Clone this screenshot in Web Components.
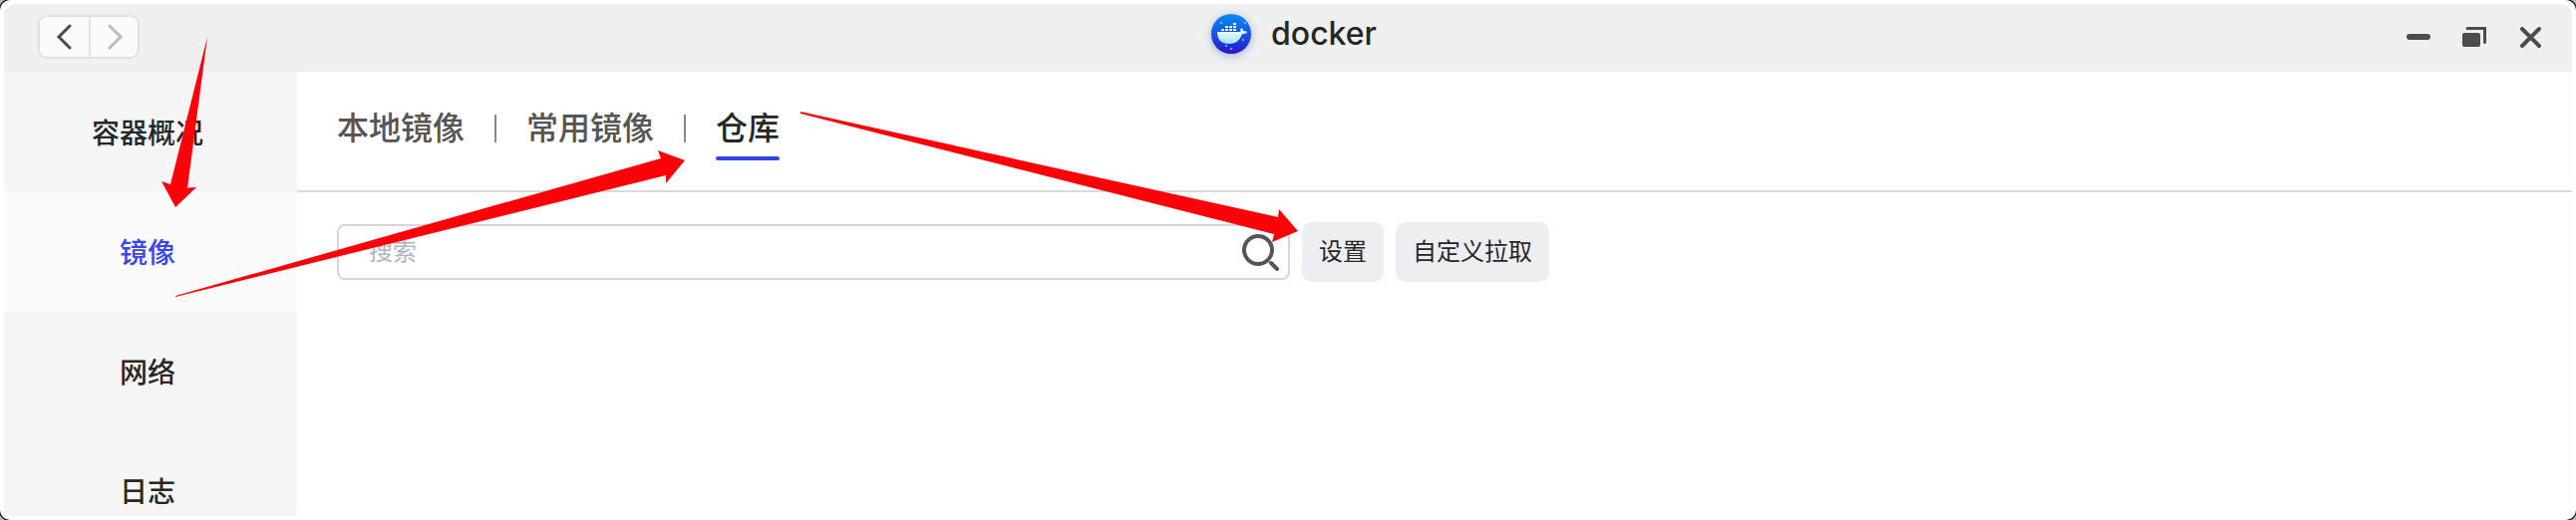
<!DOCTYPE html>
<html lang="zh-CN">
<head>
<meta charset="utf-8">
<title>docker</title>
<style>
  html, body { margin: 0; height: 100%; }
  body { background: #b9b9b9; color: #262626; font-family: Inter, "Noto Sans CJK SC", sans-serif; overflow: hidden; }
</style>
</head>
<body>
<app-window>
  <title-bar slot="bar">docker</title-bar>
  <side-nav slot="side">
    <nav-item>容器概况</nav-item>
    <nav-item current>镜像</nav-item>
    <nav-item>网络</nav-item>
    <nav-item>日志</nav-item>
  </side-nav>
  <tab-bar>
    <tab-item>本地镜像</tab-item>
    <tab-item>常用镜像</tab-item>
    <tab-item current>仓库</tab-item>
  </tab-bar>
  <tool-row>
    <search-box placeholder="搜索"></search-box>
    <soft-button>设置</soft-button>
    <soft-button>自定义拉取</soft-button>
  </tool-row>
</app-window>
<guide-arrows></guide-arrows>

<script>
const define = (name, html, setup) => {
  customElements.define(name, class extends HTMLElement {
    constructor() {
      super();
      this.attachShadow({ mode: 'open' }).innerHTML = html;
    }
    connectedCallback() { if (setup) setup(this, this.shadowRoot); }
  });
};

define('app-window', `
<style>
  :host { display: grid; grid-template: auto minmax(0, 1fr) / 294px minmax(0, 1fr); box-sizing: border-box;
    height: 100vh; padding: 4px; border-radius: 10px; background: #fff; box-shadow: 0 0 0 1px #000; }
  header { grid-column: 1 / -1; border-radius: 12px 12px 0 0; overflow: hidden; }
  aside { border-radius: 0 0 0 8px; overflow: hidden; background: #f5f5f5; }
  main { background: #fefefe; border-radius: 0 0 8px 0; min-width: 0; }
</style>
<header><slot name="bar"></slot></header>
<aside><slot name="side"></slot></aside>
<main><slot></slot></main>`);

define('title-bar', `
<style>
  :host { display: grid; grid-template-columns: 1fr auto 1fr; align-items: center; height: 68px;
    box-sizing: border-box; padding: 0 30px 2px 34px; background: #f0f0f0; }
  button { display: grid; place-items: center; margin: 0; padding: 0; border: 0; background: none; color: #4c4c4c; }
  svg { display: block; }
  .history { display: flex; justify-self: start; border: 2px solid #e1e1e1; border-radius: 9px; background: #fbfbfb; }
  .history button { width: 49px; height: 40px; }
  .history button + button { border-left: 2px solid #e1e1e1; color: #bcbcbc; }
  h1 { display: flex; align-items: center; gap: 20px; margin: 0; padding: 0 0 6px 8px; font-size: 32px; line-height: 40px; font-weight: 500; }
  h1 svg { overflow: visible; filter: drop-shadow(0 2px 4px #9fb0d0); }
  .controls { display: flex; gap: 32px; justify-self: end; }
</style>
<div class="history">
  <button aria-label="后退"><svg width="24" height="28" viewBox="0 0 24 28" fill="none" stroke="currentColor" stroke-width="3" stroke-linecap="round"><path d="M17 3 6 14l11 11"/></svg></button>
  <button aria-label="前进" disabled><svg width="24" height="28" viewBox="0 0 24 28" fill="none" stroke="currentColor" stroke-width="3" stroke-linecap="round"><path d="m7 3 11 11L7 25"/></svg></button>
</div>
<h1>
  <svg width="40" height="40" viewBox="0 0 40 40" aria-hidden="true">
    <defs>
      <linearGradient id="sea" x1="0" y1="0" x2="0" y2="1"><stop offset="0" stop-color="#0a8cf5"/><stop offset=".5" stop-color="#1454e6"/><stop offset="1" stop-color="#2a14c4"/></linearGradient>
      <linearGradient id="hull" x1="0" y1="0" x2="0" y2="1"><stop offset="0" stop-color="#fff"/><stop offset="1" stop-color="#9fe4fb"/></linearGradient>
    </defs>
    <circle cx="20" cy="20" r="20" fill="url(#sea)"/>
    <path fill="url(#hull)" d="M6 18h23c1-1 0-3 1-4 2 1 2 2 2 3 1 0 3 0 4 1-1 2-3 2-5 2-2 6-6 10-13 10C10 30 6 26 6 18Z"/>
    <path fill="#fff" d="M10 15h3v2h-3zm4 0h3v2h-3zm4 0h3v2h-3zm4 0h3v2h-3zM14 12h3v2h-3zm4 0h3v2h-3zm4 0h3v2h-3zm0-3h3v2h-3z"/>
    <g fill="#9cc8ff"><circle cx="10" cy="9" r="1"/><circle cx="32" cy="26" r="1"/><circle cx="20" cy="35" r="1"/><circle cx="15" cy="32" r="1"/><circle cx="34" cy="9" r="1"/></g>
  </svg>
  <slot></slot>
</h1>
<div class="controls">
  <button aria-label="最小化"><svg width="24" height="24" viewBox="0 0 24 24" fill="currentColor"><rect y="9" width="24" height="6" rx="3"/></svg></button>
  <button aria-label="还原"><svg width="24" height="24" viewBox="0 0 24 24" fill="currentColor"><rect y="8" width="18" height="14" rx="2"/><path d="M5 3.500h17.500v14" fill="none" stroke="currentColor" stroke-width="3" stroke-linecap="round"/></svg></button>
  <button aria-label="关闭"><svg width="24" height="24" viewBox="0 0 24 24" fill="none" stroke="currentColor" stroke-width="4" stroke-linecap="round"><path d="m4 4 17 17M21 4 4 21"/></svg></button>
</div>`);

define('side-nav', `
<style>
  :host { display: block; height: 100%; }
  nav { display: flex; flex-direction: column; }
</style>
<nav aria-label="主菜单"><slot></slot></nav>`);

define('nav-item', `
<style>
  :host { display: block; flex: none; background: #f5f5f5; }
  :host([current]) { background: #fbfbfb; }
  a { display: grid; place-items: center; box-sizing: border-box; height: 120px; padding: 4px 6px 0 0; font-size: 28px; line-height: 40px; font-weight: 500; color: inherit; text-decoration: none; }
  :host([current]) a { color: #3a45ee; }
</style>
<a href="#"><slot></slot></a>`, (host, root) => {
  if (host.hasAttribute('current')) root.querySelector('a').setAttribute('aria-current', 'page');
});

define('tab-bar', `
<style>
  :host { display: block; border-bottom: 2px solid #dadada; }
  nav { display: flex; align-items: center; box-sizing: border-box; height: 119px; padding: 0 40px 6px; }
  ::slotted(:not(:first-child)) { margin-left: 30px; }
</style>
<nav aria-label="镜像分类"><slot></slot></nav>`);

define('tab-item', `
<style>
  :host { display: flex; align-items: center; gap: 30px; color: #555; }
  :host(:not(:first-child))::before { content: ""; width: 2px; height: 28px; background: #888; }
  :host([current]) { color: #262626; }
  a { position: relative; font-size: 32px; line-height: 48px; font-weight: 500; color: inherit; text-decoration: none; white-space: nowrap; }
  :host([current]) a::after { content: ""; position: absolute; left: 0; right: 0; bottom: -8px; height: 4px; border-radius: 2px; background: #3343e4; }
</style>
<a href="#"><slot></slot></a>`, (host, root) => {
  if (host.hasAttribute('current')) root.querySelector('a').setAttribute('aria-current', 'page');
});

define('tool-row', `
<style>
  :host { display: flex; align-items: center; gap: 12px; padding: 30px 40px; }
</style>
<slot></slot>`);

define('search-box', `
<style>
  :host { display: block; flex: 0 1 956px; min-width: 0; }
  form { display: flex; align-items: center; box-sizing: border-box; height: 56px; padding: 0 8px 0 30px; border: 2px solid #d5d6d9; border-radius: 8px; background: #fff; }
  input { flex: 1; min-width: 0; padding: 0; border: 0; outline: 0; background: none; color: #262626; font: 24px/36px Inter, "Noto Sans CJK SC", sans-serif; }
  input::placeholder { color: #b0b6be; font-weight: 400; opacity: 1; }
  button { display: block; padding: 0; border: 0; background: none; color: #555; }
  svg { display: block; }
</style>
<form role="search">
  <input type="text" aria-label="搜索">
  <button type="button" aria-label="开始搜索"><svg width="38" height="38" viewBox="0 0 38 38" fill="none" stroke="currentColor" stroke-width="4" stroke-linecap="round"><circle cx="16" cy="17" r="14"/><path d="m29 30 6 6"/></svg></button>
</form>`, (host, root) => {
  root.querySelector('input').placeholder = host.getAttribute('placeholder') || '';
});

define('soft-button', `
<style>
  :host { display: block; flex: none; }
  button { display: block; height: 60px; padding: 0 17px; border: 0; border-radius: 10px; background: #eeeef2; color: #262626; font: 24px/36px Inter, "Noto Sans CJK SC", sans-serif; }
</style>
<button type="button"><slot></slot></button>`);

// Red walkthrough arrows that lie over the window and let clicks through.
define('guide-arrows', `
<style>
  :host { position: absolute; top: 0; left: 0; pointer-events: none; }
  svg { display: block; }
</style>
<svg width="1320" height="320" viewBox="0 0 1320 320" fill="#fe0008" aria-hidden="true">
  <path d="M208 37 171 185l-9-3 14 26 21-20-9 .5Z"/>
  <path d="M176 297 663 159l-3-8 27 10-19 23v-8L176 298Z"/>
  <path d="M803 112 1282 218l1-8 19 22-26 11 2-8L803 114Z"/>
</svg>`);
</script>
</body>
</html>
